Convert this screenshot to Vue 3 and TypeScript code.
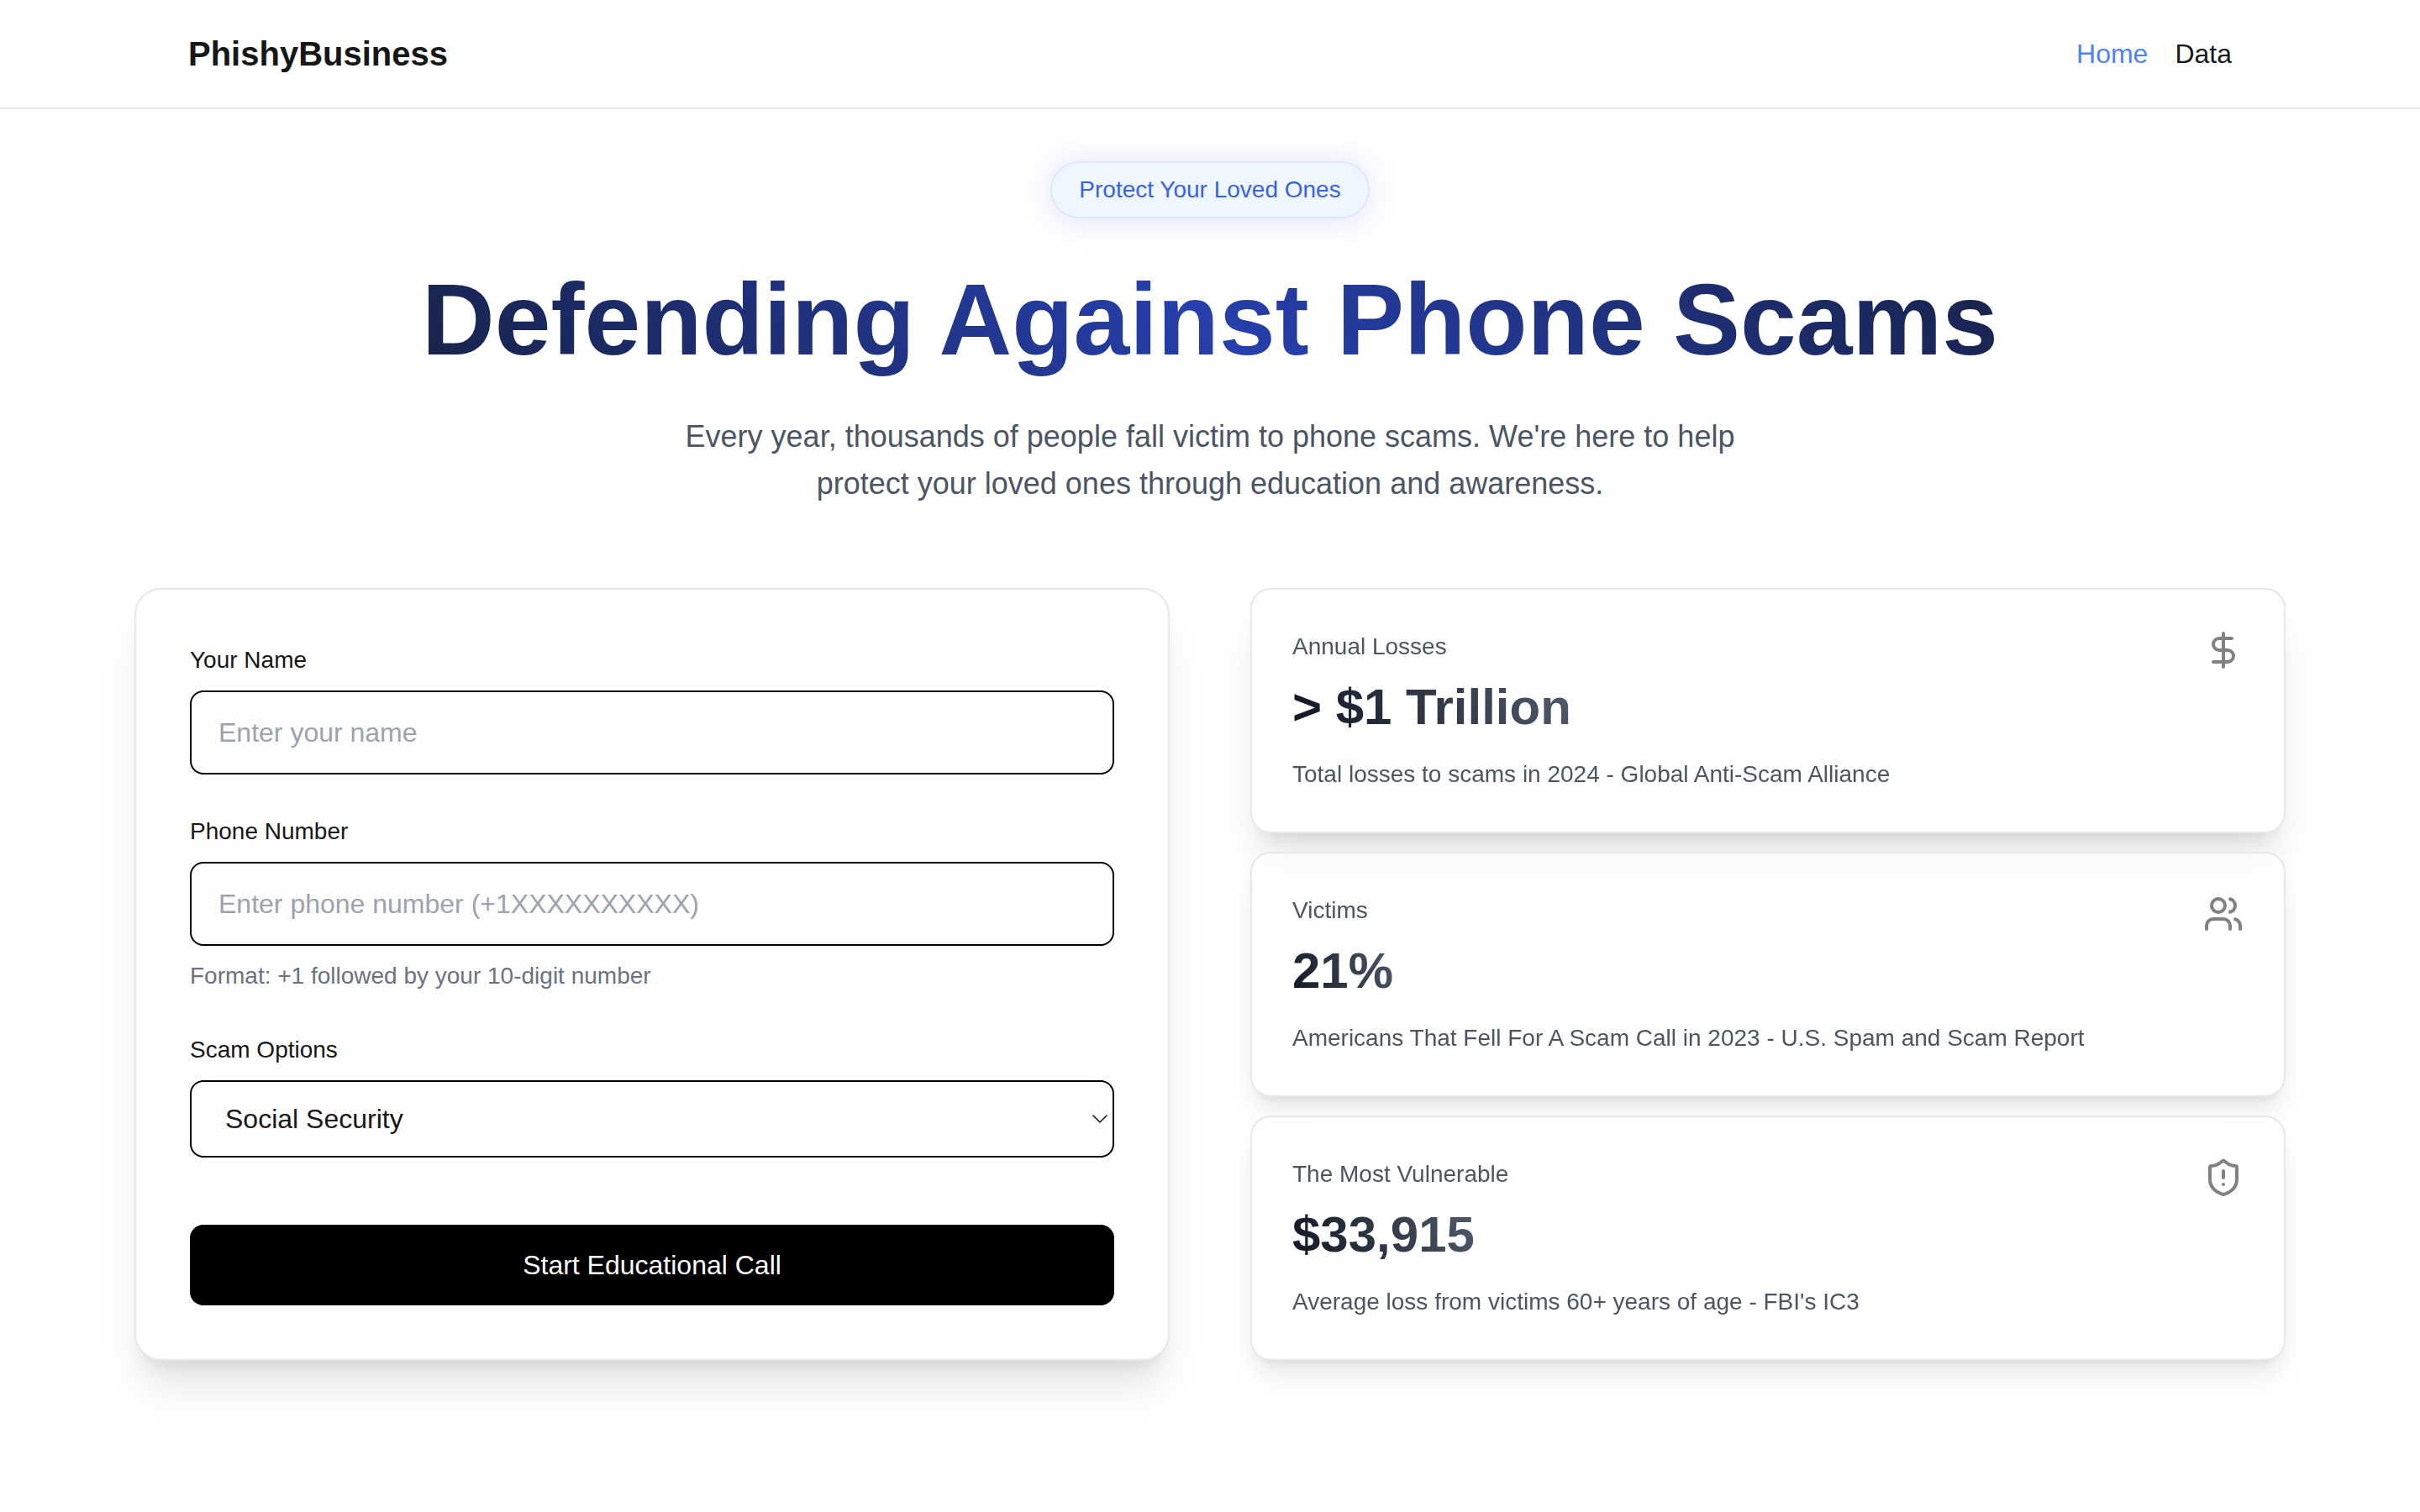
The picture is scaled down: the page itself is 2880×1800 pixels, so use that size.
<script setup lang="ts">
import { ref } from 'vue'

interface Stat {
  icon: 'dollar' | 'users' | 'shield'
  label: string
  value: string
  note: string
  raised?: boolean
}

const name = ref('')
const phone = ref('')
const scam = ref('Social Security')
const scamOptions = ['Social Security', 'Tech Support', 'IRS']

const stats: Stat[] = [
  {
    icon: 'dollar',
    label: 'Annual Losses',
    value: '> $1 Trillion',
    note: 'Total losses to scams in 2024 - Global Anti-Scam Alliance',
    raised: true,
  },
  {
    icon: 'users',
    label: 'Victims',
    value: '21%',
    note: 'Americans That Fell For A Scam Call in 2023 - U.S. Spam and Scam Report',
  },
  {
    icon: 'shield',
    label: 'The Most Vulnerable',
    value: '$33,915',
    note: "Average loss from victims 60+ years of age - FBI's IC3",
  },
]
</script>

<template>
  <div class="page">
    <header class="header">
      <div class="header-inner">
        <a class="logo" href="#">PhishyBusiness</a>
        <nav class="nav">
          <a class="nav-link active" href="#">Home</a>
          <a class="nav-link" href="#data">Data</a>
        </nav>
      </div>
    </header>

    <main class="main">
      <section class="hero">
        <span class="badge">Protect Your Loved Ones</span>
        <h1 class="title">Defending Against Phone Scams</h1>
        <p class="lead">
          Every year, thousands of people fall victim to phone scams. We're here to help protect
          your loved ones through education and awareness.
        </p>
      </section>

      <div class="columns">
        <form class="form" @submit.prevent>
          <div class="field">
            <label class="label" for="name">Your Name</label>
            <input id="name" v-model="name" class="control" type="text" placeholder="Enter your name" />
          </div>
          <div class="field">
            <label class="label" for="phone">Phone Number</label>
            <input
              id="phone"
              v-model="phone"
              class="control"
              type="tel"
              placeholder="Enter phone number (+1XXXXXXXXXX)"
            />
            <p class="hint">Format: +1 followed by your 10-digit number</p>
          </div>
          <div class="field">
            <label class="label" for="scam">Scam Options</label>
            <div class="select-wrap">
              <select id="scam" v-model="scam" class="control select">
                <option v-for="option in scamOptions" :key="option" :value="option">{{ option }}</option>
              </select>
              <svg class="chevron" viewBox="0 0 18 10" aria-hidden="true">
                <path d="M1 1l8 8 8-8" />
              </svg>
            </div>
          </div>
          <button class="submit" type="submit">Start Educational Call</button>
        </form>

        <div class="stats">
          <article v-for="stat in stats" :key="stat.label" class="stat" :class="{ raised: stat.raised }">
            <div class="stat-body">
              <p class="stat-label">{{ stat.label }}</p>
              <p class="stat-value">{{ stat.value }}</p>
              <p class="stat-note">{{ stat.note }}</p>
            </div>
            <svg class="stat-icon" viewBox="0 0 24 24" aria-hidden="true">
              <template v-if="stat.icon === 'dollar'">
                <line x1="12" x2="12" y1="2" y2="22" />
                <path d="M17 5H9.5a3.5 3.5 0 0 0 0 7h5a3.5 3.5 0 0 1 0 7H6" />
              </template>
              <template v-else-if="stat.icon === 'users'">
                <path d="M16 21v-2a4 4 0 0 0-4-4H6a4 4 0 0 0-4 4v2" />
                <circle cx="9" cy="7" r="4" />
                <path d="M22 21v-2a4 4 0 0 0-3-3.87" />
                <path d="M16 3.13a4 4 0 0 1 0 7.75" />
              </template>
              <template v-else>
                <path
                  d="M20 13c0 5-3.5 7.5-7.66 8.95a1 1 0 0 1-.67-.01C7.5 20.5 4 18 4 13V6a1 1 0 0 1 1-1c2 0 4.5-1.2 6.24-2.72a1.17 1.17 0 0 1 1.52 0C14.51 3.81 17 5 19 5a1 1 0 0 1 1 1z"
                />
                <path d="M12 8v4" />
                <path d="M12 16h.01" />
              </template>
            </svg>
          </article>
        </div>
      </div>
    </main>
  </div>
</template>

<style>
body {
  margin: 0;
  background: #fff;
}
</style>

<style scoped>
.page {
  font-family: 'Liberation Sans', Arial, sans-serif;
  font-size: 32px;
  color: #171717;
}

.page *,
.page *::before {
  box-sizing: border-box;
}

p,
h1 {
  margin: 0;
}

.header {
  border-bottom: 2px solid #e5e7eb;
}

.header-inner {
  display: flex;
  align-items: center;
  justify-content: space-between;
  max-width: 2560px;
  margin: 0 auto;
  padding: 36px 64px;
}

.logo {
  font-size: 40px;
  line-height: 56px;
  font-weight: 700;
  color: #171717;
  text-decoration: none;
}

.nav {
  display: flex;
  gap: 32px;
}

.nav-link {
  line-height: 48px;
  color: #171717;
  text-decoration: none;
}

.nav-link.active {
  color: #4f83f1;
}

.main {
  max-width: 2560px;
  margin: 0 auto;
  padding: 62px 0 180px;
}

.hero {
  display: flex;
  flex-direction: column;
  align-items: center;
  text-align: center;
  margin-bottom: 96px;
}

.badge {
  padding: 12px 32px;
  border: 2px solid #dde8fb;
  border-radius: 34px;
  background: #eff6ff;
  box-shadow: 0 2px 36px rgba(80, 88, 235, 0.19);
  font-size: 28px;
  line-height: 40px;
  color: #3762e3;
}

.title {
  width: 100%;
  margin: 48px 0 40px;
  font-size: 120px;
  line-height: 144px;
  font-weight: 700;
  background: linear-gradient(45deg, #131827, #263fab, #131827);
  background-clip: text;
  -webkit-background-clip: text;
  color: transparent;
}

.lead {
  max-width: 1344px;
  font-size: 36px;
  line-height: 56px;
  color: #4b5563;
}

.columns {
  display: grid;
  grid-template-columns: 1fr 1fr;
  align-items: start;
  gap: 96px;
}

.form {
  display: flex;
  flex-direction: column;
  gap: 48px;
  padding: 64px;
  border: 2px solid #e5e7eb;
  border-radius: 32px;
  background: #fefefe;
  box-shadow:
    0 40px 50px -10px rgba(0, 0, 0, 0.1),
    0 16px 20px -12px rgba(0, 0, 0, 0.1);
}

.field {
  display: flex;
  flex-direction: column;
  gap: 16px;
}

.label {
  font-size: 28px;
  line-height: 40px;
}

.control {
  width: 100%;
  height: 100px;
  padding: 0 32px;
  border: 2px solid #000;
  border-radius: 16px;
  background: #fefefe;
  font-family: inherit;
  font-size: 32px;
  color: #171717;
}

.control::placeholder {
  color: #9ca3af;
  opacity: 1;
}

.hint {
  font-size: 28px;
  line-height: 40px;
  color: #6b7280;
}

.select-wrap {
  position: relative;
}

.select {
  display: block;
  height: 92px;
  padding: 0 40px;
  appearance: none;
}

.chevron {
  position: absolute;
  top: 50%;
  right: 8px;
  width: 18px;
  height: 10px;
  margin-top: -5px;
  fill: none;
  stroke: #171717;
  stroke-width: 1.6;
  stroke-linecap: round;
  stroke-linejoin: round;
  pointer-events: none;
}

.submit {
  height: 96px;
  margin-top: 32px;
  border: 0;
  border-radius: 16px;
  background: #000;
  font-family: inherit;
  font-size: 32px;
  color: #fff;
}

.stats {
  display: flex;
  flex-direction: column;
  gap: 22px;
}

.stat {
  display: flex;
  align-items: flex-start;
  justify-content: space-between;
  padding: 48px;
  border: 2px solid #e5e7eb;
  border-radius: 24px;
  background: rgba(255, 255, 255, 0.5);
  backdrop-filter: blur(32px);
  box-shadow:
    0 20px 30px -6px rgba(0, 0, 0, 0.1),
    0 8px 12px -8px rgba(0, 0, 0, 0.1);
}

.stat.raised {
  box-shadow:
    0 40px 50px -10px rgba(0, 0, 0, 0.1),
    0 16px 20px -12px rgba(0, 0, 0, 0.1);
}

.stat-body {
  display: flex;
  flex-direction: column;
  align-items: flex-start;
}

.stat-label,
.stat-note {
  font-size: 28px;
  line-height: 40px;
  color: #4b5563;
}

.stat-value {
  margin: 16px 0 24px;
  font-size: 60px;
  line-height: 72px;
  font-weight: 700;
  background: linear-gradient(60deg, #0f1422, #525c6a);
  background-clip: text;
  -webkit-background-clip: text;
  color: transparent;
}

.stat-icon {
  width: 48px;
  height: 48px;
  flex: none;
  fill: none;
  stroke: #818181;
  stroke-width: 2;
  stroke-linecap: round;
  stroke-linejoin: round;
}
</style>
